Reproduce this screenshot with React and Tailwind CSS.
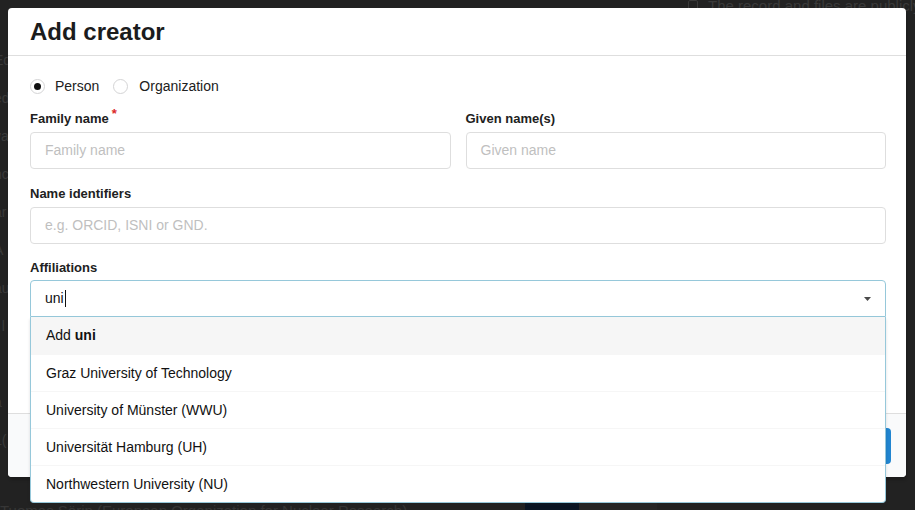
export default function App() {
  const items = [
    "Graz University of Technology",
    "University of Münster (WWU)",
    "Universität Hamburg (UH)",
    "Northwestern University (NU)",
  ];
  const fragments = ["Edit", "ed", "va", "nc", "ar", "A", "au", ", l", "i,", "a", "L("];
  return (
    <div className="relative w-[915px] h-[510px] overflow-hidden bg-[#222222] font-['Liberation_Sans',Arial,sans-serif] text-[14px] text-[#212121]">
      {/* dimmed page behind the modal */}
      <div className="flex flex-col h-full text-[#3a3a3a]">
        <div className="h-[8px] flex items-end pl-[688px] gap-[10px] whitespace-nowrap">
          <span className="w-[10px] h-[11px] shrink-0 border border-[#3a3a3a] rounded-[2px] mb-[-3px]"></span>
          <span className="text-[15px] leading-[16px] mb-[-6px]">The record and files are publicly accessible.</span>
        </div>
        <div className="flex-1 flex flex-col gap-[22px] pt-[44px] pl-0 ml-[-6px] leading-[16px]">
          {fragments.map((f, i) => (
            <span key={i} className="whitespace-nowrap">{f}</span>
          ))}
        </div>
        <div className="h-[7px] flex items-start whitespace-nowrap">
          <span className="w-[525px] shrink-0 text-[15px] leading-[16px] text-[#363636]">Tuomas Sörin (European Organization for Nuclear Research)</span>
          <span className="w-[54px] h-[20px] rounded-[3px] bg-[#0a1523] mt-[-2px]"></span>
          <span className="w-[78px] h-[20px] rounded-[3px] bg-[#262626] mt-[-2px]"></span>
        </div>
      </div>

      {/* modal */}
      <div className="absolute left-[8px] top-[8px] w-[898px] h-[469px] bg-white rounded-[4px] shadow-[1px_3px_3px_0_rgba(0,0,0,0.2)]">
        <div className="h-[48px] pl-[22px] pr-[20px] flex items-center border-b border-[#dedede]">
          <h1 className="text-[24px] font-bold leading-none text-[#1b1c1d]">Add creator</h1>
        </div>

        <div className="h-[357px] pl-[22px] pr-[20px] pt-[20px]">
          {/* type radios */}
          <div className="h-[20px] flex items-center">
            <div className="flex items-center">
              <span className="w-[15px] h-[15px] rounded-full border border-[#d4d4d5] flex items-center justify-center">
                <span className="w-[7px] h-[7px] rounded-full bg-[#111]"></span>
              </span>
              <span className="ml-[10px] leading-[20px]">Person</span>
            </div>
            <div className="flex items-center ml-[14px]">
              <span className="w-[15px] h-[15px] rounded-full border border-[#d4d4d5]"></span>
              <span className="ml-[11px] leading-[20px]">Organization</span>
            </div>
          </div>

          {/* names */}
          <div className="grid grid-cols-2 gap-x-[15px] mt-[15px]">
            <div>
              <div className="h-[16px] mb-[5px] text-[13px] font-bold leading-[16px] text-[#212121]">
                Family name<span className="text-[#db2828] ml-[3px] relative top-[-5px]">*</span>
              </div>
              <div className="h-[37px] border border-[#dedede] rounded-[4px] px-[14px] flex items-center text-[#bfbfbf]">Family name</div>
            </div>
            <div>
              <div className="h-[16px] mb-[5px] text-[13px] font-bold leading-[16px] text-[#212121]">Given name(s)</div>
              <div className="h-[37px] border border-[#dedede] rounded-[4px] px-[14px] flex items-center text-[#bfbfbf]">Given name</div>
            </div>
          </div>

          <div className="mt-[16.7px]">
            <div className="h-[16px] mb-[5px] text-[13px] font-bold leading-[16px]">Name identifiers</div>
            <div className="h-[37px] border border-[#dedede] rounded-[4px] px-[14px] flex items-center text-[#bfbfbf]">e.g. ORCID, ISNI or GND.</div>
          </div>

          <div className="mt-[16.7px]">
            <div className="h-[16px] mb-[4px] text-[13px] font-bold leading-[16px]">Affiliations</div>
            <div className="relative z-10">
              <div className="h-[37px] border border-[#96c8da] rounded-t-[4px] px-[14px] flex items-center bg-white">
                <span className="text-[#111]">uni</span>
                <span className="w-px h-[17px] bg-[#111] ml-[1px]"></span>
                <span className="flex-1"></span>
                <svg width="7" height="4" viewBox="0 0 7 4">
                  <polygon points="0,0 7,0 3.5,4" fill="#4a4a4a" />
                </svg>
              </div>
              <div className="absolute left-0 right-0 top-full border border-t-0 border-[#96c8da] rounded-b-[4px] bg-white shadow-[0_2px_3px_0_rgba(34,36,38,0.15)]">
                <div className="h-[37px] px-[15px] flex items-center bg-[#f6f6f6] text-[#111]">
                  Add&nbsp;<b>uni</b>
                </div>
                {items.map((t) => (
                  <div key={t} className="h-[37px] px-[15px] flex items-center border-t border-[#f6f6f6] text-[#111]">
                    {t}
                  </div>
                ))}
              </div>
            </div>
          </div>
        </div>

        <div className="h-[64px] bg-[#f9fafb] border-t border-[#dedede] rounded-b-[4px] flex justify-end items-start pt-[14px] pr-[15px] gap-[4px]">
          <button className="h-[36px] px-[20px] rounded-[4px] bg-[#e0e1e2] text-[#5a5a5a] font-bold">Cancel</button>
          <button className="h-[36px] px-[20px] rounded-[4px] bg-[#2185d0] text-white font-bold">Save</button>
        </div>
      </div>
    </div>
  );
}
